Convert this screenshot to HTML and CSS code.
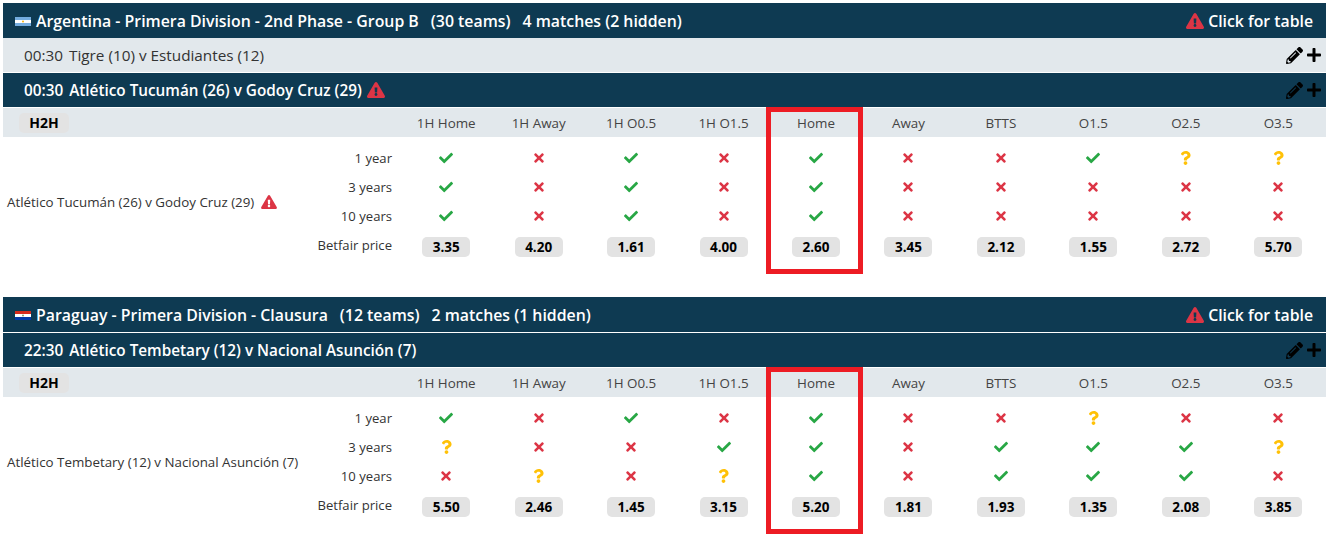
FILE: index.html
```html
<!DOCTYPE html>
<html lang="en">
<head>
<meta charset="utf-8">
<title>Fixtures</title>
<link rel="stylesheet" href="styles.css">
</head>
<body>
<svg class="defs" aria-hidden="true">
  <symbol id="check" viewBox="0 0 512 512"><path d="M173.898 439.404l-166.4-166.4c-9.997-9.997-9.997-26.206 0-36.204l36.203-36.204c9.997-9.998 26.207-9.998 36.204 0L192 312.69 432.095 72.596c9.997-9.997 26.207-9.997 36.204 0l36.203 36.204c9.997 9.997 9.997 26.206 0 36.204l-294.4 294.401c-9.998 9.997-26.207 9.997-36.204-.001z"/></symbol>
  <symbol id="times" viewBox="0 0 352 512"><path d="M242.72 256l100.07-100.07c12.28-12.28 12.28-32.19 0-44.48l-22.24-22.24c-12.28-12.28-32.19-12.28-44.48 0L176 189.28 75.93 89.21c-12.28-12.28-32.19-12.28-44.48 0L9.21 111.45c-12.28 12.28-12.28 32.19 0 44.48L109.28 256 9.21 356.07c-12.28 12.28-12.28 32.19 0 44.48l22.24 22.24c12.28 12.28 32.2 12.28 44.48 0L176 322.72l100.07 100.07c12.28 12.28 32.2 12.28 44.48 0l22.24-22.24c12.28-12.28 12.28-32.19 0-44.48L242.72 256z"/></symbol>
  <symbol id="question" viewBox="0 0 384 512"><path d="M202.021 0C122.202 0 70.503 32.703 29.914 91.026c-7.363 10.58-5.093 25.086 5.178 32.874l43.138 32.709c10.373 7.865 25.132 6.026 33.253-4.148 25.049-31.381 43.63-49.449 82.757-49.449 30.764 0 68.816 19.799 68.816 49.631 0 22.552-18.617 34.134-48.993 51.164-35.423 19.86-82.299 44.576-82.299 106.405V320c0 13.255 10.745 24 24 24h72.471c13.255 0 24-10.745 24-24v-5.773c0-42.86 125.268-44.645 125.268-160.627C377.504 66.256 286.902 0 202.021 0zM192 373.459c-38.196 0-69.271 31.075-69.271 69.271 0 38.195 31.075 69.27 69.271 69.27s69.271-31.075 69.271-69.271-31.075-69.27-69.271-69.27z"/></symbol>
  <symbol id="warn" viewBox="0 0 576 512"><path d="M569.517 440.013C587.975 472.007 564.806 512 527.94 512H48.054c-36.937 0-59.999-40.055-41.577-71.987L246.423 23.985c18.467-32.009 64.72-31.951 83.154 0l239.94 416.028zM288 354c-25.405 0-46 20.595-46 46s20.595 46 46 46 46-20.595 46-46-20.595-46-46-46zm-43.673-165.346l7.418 136c.347 6.364 5.609 11.346 11.982 11.346h48.546c6.373 0 11.635-4.982 11.982-11.346l7.418-136c.375-6.874-5.098-12.654-11.982-12.654h-63.383c-6.884 0-12.356 5.78-11.981 12.654z"/></symbol>
  <symbol id="pencil" viewBox="0 0 512 512"><path d="M497.9 142.1l-46.1 46.1c-4.7 4.7-12.3 4.7-17 0l-111-111c-4.7-4.7-4.7-12.3 0-17l46.1-46.1c18.7-18.7 49.1-18.7 67.9 0l60.1 60.1c18.8 18.7 18.8 49.1 0 67.9zM284.2 99.8L21.6 362.4.4 483.9c-2.9 16.4 11.4 30.6 27.8 27.8l121.5-21.3 262.6-262.6c4.7-4.7 4.7-12.3 0-17l-111-111c-4.8-4.7-12.4-4.7-17.1 0zM124.1 339.9c-5.5-5.5-5.5-14.3 0-19.8l154-154c5.5-5.5 14.3-5.5 19.8 0s5.5 14.3 0 19.8l-154 154c-5.5 5.5-14.3 5.5-19.8 0zM88 424h48v36.3l-64.5 11.3-31.1-31.1L51.7 376H88v48z"/></symbol>
  <symbol id="plus" viewBox="0 0 448 512"><path d="M416 208H272V64c0-17.67-14.33-32-32-32h-32c-17.67 0-32 14.33-32 32v144H32c-17.67 0-32 14.33-32 32v32c0 17.67 14.33 32 32 32h144v144c0 17.67 14.33 32 32 32h32c17.67 0 32-14.33 32-32V304h144c17.67 0 32-14.33 32-32v-32c0-17.67-14.33-32-32-32z"/></symbol>
</svg>

<section class="league">
  <header class="league-head">
    <div class="league-title">
      <svg class="flag" viewBox="0 0 16 9"><rect width="16" height="9" fill="#74acdf"/><rect y="3" width="16" height="3" fill="#fff"/><circle cx="8" cy="4.5" r="1" fill="#f6b40e"/></svg>
      <span>Argentina - Primera Division - 2nd Phase - Group B</span>
      <span class="gap">(30 teams)</span>
      <span class="gap">4 matches (2 hidden)</span>
    </div>
    <div class="table-link"><svg class="ic-warn-lg"><use href="#warn"/></svg>Click for table</div>
  </header>

  <div class="match match-light">
    <div class="match-title"><span class="time">00:30</span>Tigre (10) v Estudiantes (12)</div>
    <div class="tools"><svg class="tool-pencil"><use href="#pencil"/></svg><svg class="tool-plus"><use href="#plus"/></svg></div>
  </div>
  <div class="match match-dark">
    <div class="match-title"><span class="time">00:30</span>Atlético Tucumán (26) v Godoy Cruz (29)<svg class="ic-warn-lg title-warn"><use href="#warn"/></svg></div>
    <div class="tools"><svg class="tool-pencil"><use href="#pencil"/></svg><svg class="tool-plus"><use href="#plus"/></svg></div>
  </div>

  <div class="market">
    <div class="market-head">
      <div class="h2h-cell"><span class="h2h">H2H</span></div>
      <div>1H Home</div><div>1H Away</div><div>1H O0.5</div><div>1H O1.5</div><div>Home</div><div>Away</div><div>BTTS</div><div>O1.5</div><div>O2.5</div><div>O3.5</div>
    </div>
    <div class="market-body">
      <div class="fixture">Atlético Tucumán (26) v Godoy Cruz (29) <svg class="ic-warn-sm"><use href="#warn"/></svg></div>
      <div class="label">1 year</div>
      <div class="cell"><svg class="ok"><use href="#check"/></svg></div>
      <div class="cell"><svg class="no"><use href="#times"/></svg></div>
      <div class="cell"><svg class="ok"><use href="#check"/></svg></div>
      <div class="cell"><svg class="no"><use href="#times"/></svg></div>
      <div class="cell"><svg class="ok"><use href="#check"/></svg></div>
      <div class="cell"><svg class="no"><use href="#times"/></svg></div>
      <div class="cell"><svg class="no"><use href="#times"/></svg></div>
      <div class="cell"><svg class="ok"><use href="#check"/></svg></div>
      <div class="cell"><svg class="maybe"><use href="#question"/></svg></div>
      <div class="cell"><svg class="maybe"><use href="#question"/></svg></div>
      <div class="label">3 years</div>
      <div class="cell"><svg class="ok"><use href="#check"/></svg></div>
      <div class="cell"><svg class="no"><use href="#times"/></svg></div>
      <div class="cell"><svg class="ok"><use href="#check"/></svg></div>
      <div class="cell"><svg class="no"><use href="#times"/></svg></div>
      <div class="cell"><svg class="ok"><use href="#check"/></svg></div>
      <div class="cell"><svg class="no"><use href="#times"/></svg></div>
      <div class="cell"><svg class="no"><use href="#times"/></svg></div>
      <div class="cell"><svg class="no"><use href="#times"/></svg></div>
      <div class="cell"><svg class="no"><use href="#times"/></svg></div>
      <div class="cell"><svg class="no"><use href="#times"/></svg></div>
      <div class="label">10 years</div>
      <div class="cell"><svg class="ok"><use href="#check"/></svg></div>
      <div class="cell"><svg class="no"><use href="#times"/></svg></div>
      <div class="cell"><svg class="ok"><use href="#check"/></svg></div>
      <div class="cell"><svg class="no"><use href="#times"/></svg></div>
      <div class="cell"><svg class="ok"><use href="#check"/></svg></div>
      <div class="cell"><svg class="no"><use href="#times"/></svg></div>
      <div class="cell"><svg class="no"><use href="#times"/></svg></div>
      <div class="cell"><svg class="no"><use href="#times"/></svg></div>
      <div class="cell"><svg class="no"><use href="#times"/></svg></div>
      <div class="cell"><svg class="no"><use href="#times"/></svg></div>
      <div class="label">Betfair price</div>
      <div class="cell"><span class="price">3.35</span></div>
      <div class="cell"><span class="price">4.20</span></div>
      <div class="cell"><span class="price">1.61</span></div>
      <div class="cell"><span class="price">4.00</span></div>
      <div class="cell"><span class="price">2.60</span></div>
      <div class="cell"><span class="price">3.45</span></div>
      <div class="cell"><span class="price">2.12</span></div>
      <div class="cell"><span class="price">1.55</span></div>
      <div class="cell"><span class="price">2.72</span></div>
      <div class="cell"><span class="price">5.70</span></div>
    </div>
    <div class="highlight"></div>
  </div>
</section>

<section class="league">
  <header class="league-head league-head-ruled">
    <div class="league-title">
      <svg class="flag" viewBox="0 0 16 9"><rect width="16" height="3" fill="#d52b1e"/><rect y="3" width="16" height="3" fill="#fff"/><rect y="6" width="16" height="3" fill="#0038a8"/><circle cx="8" cy="4.5" r="1" fill="#8a9a6a"/></svg>
      <span>Paraguay - Primera Division - Clausura</span>
      <span class="gap">(12 teams)</span>
      <span class="gap">2 matches (1 hidden)</span>
    </div>
    <div class="table-link"><svg class="ic-warn-lg"><use href="#warn"/></svg>Click for table</div>
  </header>

  <div class="match match-dark">
    <div class="match-title"><span class="time">22:30</span>Atlético Tembetary (12) v Nacional Asunción (7)</div>
    <div class="tools"><svg class="tool-pencil"><use href="#pencil"/></svg><svg class="tool-plus"><use href="#plus"/></svg></div>
  </div>

  <div class="market">
    <div class="market-head">
      <div class="h2h-cell"><span class="h2h">H2H</span></div>
      <div>1H Home</div><div>1H Away</div><div>1H O0.5</div><div>1H O1.5</div><div>Home</div><div>Away</div><div>BTTS</div><div>O1.5</div><div>O2.5</div><div>O3.5</div>
    </div>
    <div class="market-body">
      <div class="fixture">Atlético Tembetary (12) v Nacional Asunción (7)</div>
      <div class="label">1 year</div>
      <div class="cell"><svg class="ok"><use href="#check"/></svg></div>
      <div class="cell"><svg class="no"><use href="#times"/></svg></div>
      <div class="cell"><svg class="ok"><use href="#check"/></svg></div>
      <div class="cell"><svg class="no"><use href="#times"/></svg></div>
      <div class="cell"><svg class="ok"><use href="#check"/></svg></div>
      <div class="cell"><svg class="no"><use href="#times"/></svg></div>
      <div class="cell"><svg class="no"><use href="#times"/></svg></div>
      <div class="cell"><svg class="maybe"><use href="#question"/></svg></div>
      <div class="cell"><svg class="no"><use href="#times"/></svg></div>
      <div class="cell"><svg class="no"><use href="#times"/></svg></div>
      <div class="label">3 years</div>
      <div class="cell"><svg class="maybe"><use href="#question"/></svg></div>
      <div class="cell"><svg class="no"><use href="#times"/></svg></div>
      <div class="cell"><svg class="no"><use href="#times"/></svg></div>
      <div class="cell"><svg class="ok"><use href="#check"/></svg></div>
      <div class="cell"><svg class="ok"><use href="#check"/></svg></div>
      <div class="cell"><svg class="no"><use href="#times"/></svg></div>
      <div class="cell"><svg class="ok"><use href="#check"/></svg></div>
      <div class="cell"><svg class="ok"><use href="#check"/></svg></div>
      <div class="cell"><svg class="ok"><use href="#check"/></svg></div>
      <div class="cell"><svg class="maybe"><use href="#question"/></svg></div>
      <div class="label">10 years</div>
      <div class="cell"><svg class="no"><use href="#times"/></svg></div>
      <div class="cell"><svg class="maybe"><use href="#question"/></svg></div>
      <div class="cell"><svg class="no"><use href="#times"/></svg></div>
      <div class="cell"><svg class="maybe"><use href="#question"/></svg></div>
      <div class="cell"><svg class="ok"><use href="#check"/></svg></div>
      <div class="cell"><svg class="no"><use href="#times"/></svg></div>
      <div class="cell"><svg class="ok"><use href="#check"/></svg></div>
      <div class="cell"><svg class="ok"><use href="#check"/></svg></div>
      <div class="cell"><svg class="ok"><use href="#check"/></svg></div>
      <div class="cell"><svg class="no"><use href="#times"/></svg></div>
      <div class="label">Betfair price</div>
      <div class="cell"><span class="price">5.50</span></div>
      <div class="cell"><span class="price">2.46</span></div>
      <div class="cell"><span class="price">1.45</span></div>
      <div class="cell"><span class="price">3.15</span></div>
      <div class="cell"><span class="price">5.20</span></div>
      <div class="cell"><span class="price">1.81</span></div>
      <div class="cell"><span class="price">1.93</span></div>
      <div class="cell"><span class="price">1.35</span></div>
      <div class="cell"><span class="price">2.08</span></div>
      <div class="cell"><span class="price">3.85</span></div>
    </div>
    <div class="highlight"></div>
  </div>
</section>
</body>
</html>
```

FILE: styles.css
```css
* { box-sizing: border-box; }
html, body { background: #fff; }
body {
  margin: 0;
  padding: 3px 3px 0;
  font-family: "Open Sans", "Noto Sans", sans-serif;
  color: #333;
  overflow: hidden;
}
.defs { display: none; }
.league { margin-bottom: 37px; }
.league-head {
  height: 35px;
  background: #0e3a52;
  color: #fff;
  display: flex;
  align-items: center;
  justify-content: space-between;
  padding: 0 13px 0 12px;
  font-size: 15.85px;
  font-weight: 600;
}
.league-head-ruled { height: 36px; border-bottom: 1px solid #fff; }
.league-title { display: flex; align-items: center; white-space: pre; }
.flag { width: 16px; height: 9px; margin-right: 5px; margin-top: 1px; }
.gap { margin-left: 12px; }
.table-link { display: flex; align-items: center; font-size: 15.8px; }
.ic-warn-lg { width: 18px; height: 16px; fill: #dc3545; margin-right: 4px; }
.title-warn { margin: 0 0 0 5px; }
.match {
  height: 35px;
  border-bottom: 1px solid #fff;
  display: flex;
  align-items: center;
  justify-content: space-between;
  padding: 0 5px 0 21px;
  font-size: 15.3px;
}
.match-light { background: #e2e8ec; background-clip: padding-box; color: #333; }
.match-dark { background: #0e3a52; background-clip: padding-box; color: #fff; font-weight: 600; }
.match-title { display: flex; align-items: center; white-space: pre; }
.time { margin-right: 6px; }
.tools { display: flex; align-items: center; color: #000; }
.tool-pencil { width: 17px; height: 17px; fill: #000; margin-right: 4px; }
.tool-plus { width: 14px; height: 16px; fill: #000; }
.market { position: relative; }
.market-head {
  height: 29px;
  background: #e2e8ec;
  display: grid;
  grid-template-columns: 397px repeat(10, 1fr);
  padding-right: 1.5px;
  align-items: center;
  text-align: center;
  font-size: 13.4px;
  color: #444;
}
.h2h-cell { text-align: left; padding-left: 16px; display: flex; }
.h2h {
  width: 50px;
  height: 20px;
  line-height: 20px;
  background: #e3e3e3;
  border-radius: 5px;
  text-align: center;
  font-weight: 700;
  color: #000;
  font-size: 14px;
}
.market-body {
  display: grid;
  grid-template-columns: 300px 97px repeat(10, 1fr);
  grid-template-rows: repeat(4, 29px);
  padding: 7px 1.5px 0 0;
  font-size: 13.1px;
  color: #333;
}
.fixture {
  grid-row: 1 / 5;
  align-self: center;
  padding-left: 4px;
  white-space: nowrap;
  font-size: 13.35px;
}
.label { text-align: right; padding-right: 8px; line-height: 29px; }
.cell { display: flex; align-items: center; justify-content: center; }
.cell svg { margin-bottom: 2px; }
.ok { width: 14px; height: 14px; fill: #28a745; }
.no { width: 10px; height: 14px; fill: #dc3545; }
.maybe { width: 11px; height: 14px; fill: #ffc107; }
.ic-warn-sm { width: 16px; height: 14px; fill: #dc3545; vertical-align: -2px; margin-left: 3px; }
.price {
  width: 48px;
  height: 20px;
  line-height: 20px;
  margin-top: 3px;
  background: #e3e3e3;
  border-radius: 5px;
  text-align: center;
  font-weight: 700;
  font-size: 13.5px;
  color: #000;
}
.highlight {
  position: absolute;
  left: 763px;
  top: -1px;
  width: 97px;
  height: 167px;
  border: 5px solid #ed1c24;
  pointer-events: none;
}
```
